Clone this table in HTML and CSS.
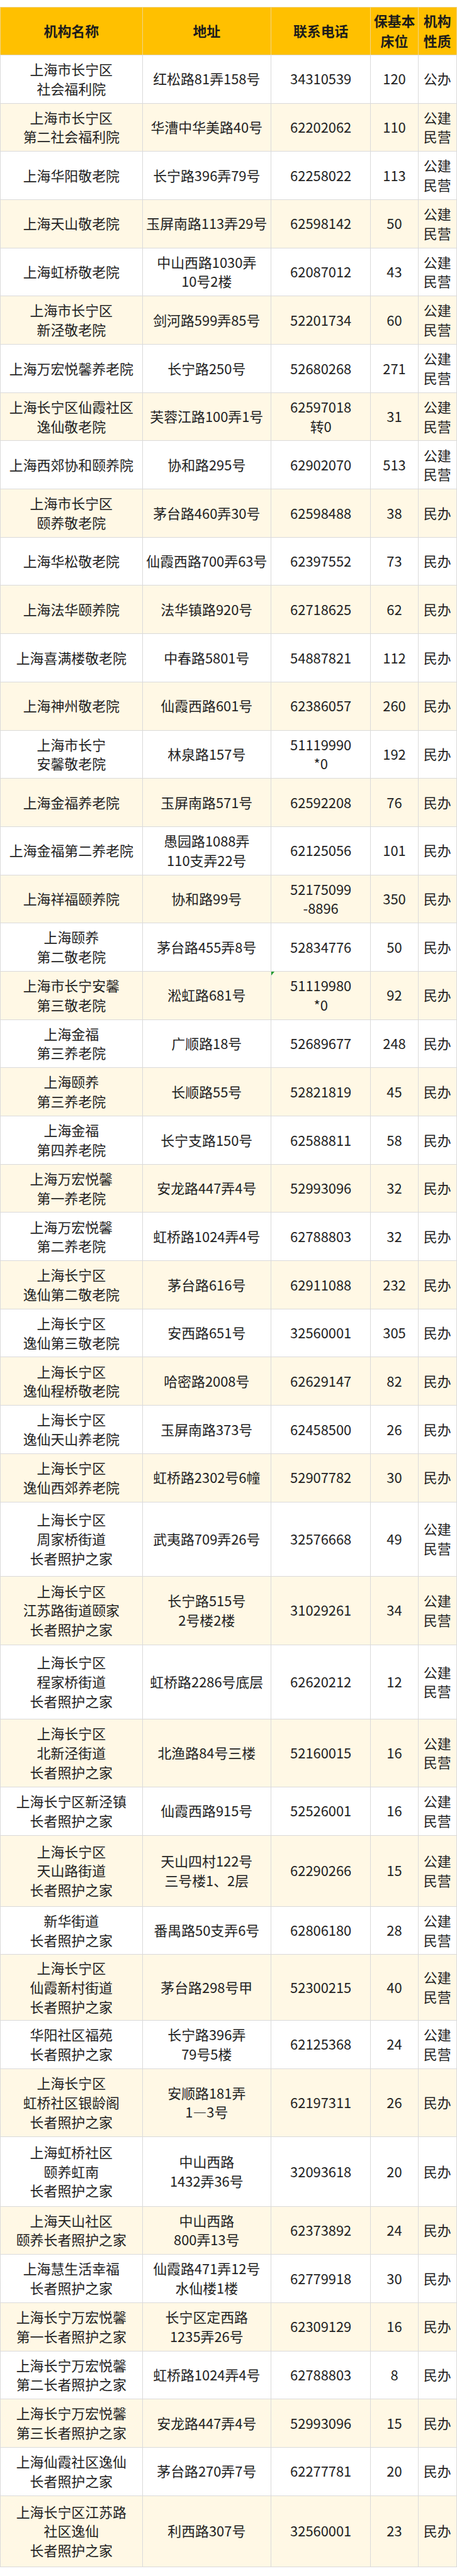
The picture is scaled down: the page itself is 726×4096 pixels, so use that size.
FILE: index.html
```html
<!DOCTYPE html>
<html lang="zh-CN">
<head>
<meta charset="utf-8">
<title>长宁区养老机构</title>
<link rel="stylesheet" href="styles.css">
</head>
<body>
<table class="list">
<colgroup>
<col class="c-name"><col class="c-addr"><col class="c-tel"><col class="c-bed"><col class="c-type">
</colgroup>
<thead>
<tr class="head"><th>机构名称</th><th>地址</th><th>联系电话</th><th>保基本床位</th><th>机构性质</th></tr>
</thead>
<tbody>
<tr><td>上海市长宁区<br>社会福利院</td><td>红松路81弄158号</td><td>34310539</td><td>120</td><td>公办</td></tr>
<tr><td>上海市长宁区<br>第二社会福利院</td><td>华漕中华美路40号</td><td>62202062</td><td>110</td><td>公建民营</td></tr>
<tr><td>上海华阳敬老院</td><td>长宁路396弄79号</td><td>62258022</td><td>113</td><td>公建民营</td></tr>
<tr><td>上海天山敬老院</td><td>玉屏南路113弄29号</td><td>62598142</td><td>50</td><td>公建民营</td></tr>
<tr><td>上海虹桥敬老院</td><td>中山西路1030弄<br>10号2楼</td><td>62087012</td><td>43</td><td>公建民营</td></tr>
<tr><td>上海市长宁区<br>新泾敬老院</td><td>剑河路599弄85号</td><td>52201734</td><td>60</td><td>公建民营</td></tr>
<tr><td>上海万宏悦馨养老院</td><td>长宁路250号</td><td>52680268</td><td>271</td><td>公建民营</td></tr>
<tr><td>上海长宁区仙霞社区<br>逸仙敬老院</td><td>芙蓉江路100弄1号</td><td>62597018<br>转0</td><td>31</td><td>公建民营</td></tr>
<tr><td>上海西郊协和颐养院</td><td>协和路295号</td><td>62902070</td><td>513</td><td>公建民营</td></tr>
<tr><td>上海市长宁区<br>颐养敬老院</td><td>茅台路460弄30号</td><td>62598488</td><td>38</td><td>民办</td></tr>
<tr><td>上海华松敬老院</td><td>仙霞西路700弄63号</td><td>62397552</td><td>73</td><td>民办</td></tr>
<tr><td>上海法华颐养院</td><td>法华镇路920号</td><td>62718625</td><td>62</td><td>民办</td></tr>
<tr><td>上海喜满楼敬老院</td><td>中春路5801号</td><td>54887821</td><td>112</td><td>民办</td></tr>
<tr><td>上海神州敬老院</td><td>仙霞西路601号</td><td>62386057</td><td>260</td><td>民办</td></tr>
<tr><td>上海市长宁<br>安馨敬老院</td><td>林泉路157号</td><td>51119990<br>*0</td><td>192</td><td>民办</td></tr>
<tr><td>上海金福养老院</td><td>玉屏南路571号</td><td>62592208</td><td>76</td><td>民办</td></tr>
<tr><td>上海金福第二养老院</td><td>愚园路1088弄<br>110支弄22号</td><td>62125056</td><td>101</td><td>民办</td></tr>
<tr><td>上海祥福颐养院</td><td>协和路99号</td><td>52175099<br>-8896</td><td>350</td><td>民办</td></tr>
<tr><td>上海颐养<br>第二敬老院</td><td>茅台路455弄8号</td><td>52834776</td><td>50</td><td>民办</td></tr>
<tr><td>上海市长宁安馨<br>第三敬老院</td><td>淞虹路681号</td><td class="note">51119980<br>*0</td><td>92</td><td>民办</td></tr>
<tr><td>上海金福<br>第三养老院</td><td>广顺路18号</td><td>52689677</td><td>248</td><td>民办</td></tr>
<tr><td>上海颐养<br>第三养老院</td><td>长顺路55号</td><td>52821819</td><td>45</td><td>民办</td></tr>
<tr><td>上海金福<br>第四养老院</td><td>长宁支路150号</td><td>62588811</td><td>58</td><td>民办</td></tr>
<tr><td>上海万宏悦馨<br>第一养老院</td><td>安龙路447弄4号</td><td>52993096</td><td>32</td><td>民办</td></tr>
<tr><td>上海万宏悦馨<br>第二养老院</td><td>虹桥路1024弄4号</td><td>62788803</td><td>32</td><td>民办</td></tr>
<tr><td>上海长宁区<br>逸仙第二敬老院</td><td>茅台路616号</td><td>62911088</td><td>232</td><td>民办</td></tr>
<tr><td>上海长宁区<br>逸仙第三敬老院</td><td>安西路651号</td><td>32560001</td><td>305</td><td>民办</td></tr>
<tr><td>上海长宁区<br>逸仙程桥敬老院</td><td>哈密路2008号</td><td>62629147</td><td>82</td><td>民办</td></tr>
<tr><td>上海长宁区<br>逸仙天山养老院</td><td>玉屏南路373号</td><td>62458500</td><td>26</td><td>民办</td></tr>
<tr><td>上海长宁区<br>逸仙西郊养老院</td><td>虹桥路2302号6幢</td><td>52907782</td><td>30</td><td>民办</td></tr>
<tr class="t162"><td>上海长宁区<br>周家桥街道<br>长者照护之家</td><td>武夷路709弄26号</td><td>32576668</td><td>49</td><td>公建民营</td></tr>
<tr class="t149"><td>上海长宁区<br>江苏路街道颐家<br>长者照护之家</td><td>长宁路515号<br>2号楼2楼</td><td>31029261</td><td>34</td><td>公建民营</td></tr>
<tr class="t162"><td>上海长宁区<br>程家桥街道<br>长者照护之家</td><td>虹桥路2286号底层</td><td>62620212</td><td>12</td><td>公建民营</td></tr>
<tr class="t148"><td>上海长宁区<br>北新泾街道<br>长者照护之家</td><td>北渔路84号三楼</td><td>52160015</td><td>16</td><td>公建民营</td></tr>
<tr><td>上海长宁区新泾镇<br>长者照护之家</td><td>仙霞西路915号</td><td>52526001</td><td>16</td><td>公建民营</td></tr>
<tr class="t155"><td>上海长宁区<br>天山路街道<br>长者照护之家</td><td>天山四村122号<br>三号楼1、2层</td><td>62290266</td><td>15</td><td>公建民营</td></tr>
<tr><td>新华街道<br>长者照护之家</td><td>番禺路50支弄6号</td><td>62806180</td><td>28</td><td>公建民营</td></tr>
<tr class="t143"><td>上海长宁区<br>仙霞新村街道<br>长者照护之家</td><td>茅台路298号甲</td><td>52300215</td><td>40</td><td>公建民营</td></tr>
<tr><td>华阳社区福苑<br>长者照护之家</td><td>长宁路396弄<br>79号5楼</td><td>62125368</td><td>24</td><td>公建民营</td></tr>
<tr class="t149"><td>上海长宁区<br>虹桥社区银龄阁<br>长者照护之家</td><td>安顺路181弄<br>1—3号</td><td>62197311</td><td>26</td><td>民办</td></tr>
<tr class="t151"><td>上海虹桥社区<br>颐养虹南<br>长者照护之家</td><td>中山西路<br>1432弄36号</td><td>32093618</td><td>20</td><td>民办</td></tr>
<tr><td>上海天山社区<br>颐养长者照护之家</td><td>中山西路<br>800弄13号</td><td>62373892</td><td>24</td><td>民办</td></tr>
<tr><td>上海慧生活幸福<br>长者照护之家</td><td>仙霞路471弄12号<br>水仙楼1楼</td><td>62779918</td><td>30</td><td>民办</td></tr>
<tr><td>上海长宁万宏悦馨<br>第一长者照护之家</td><td>长宁区定西路<br>1235弄26号</td><td>62309129</td><td>16</td><td>民办</td></tr>
<tr><td>上海长宁万宏悦馨<br>第二长者照护之家</td><td>虹桥路1024弄4号</td><td>62788803</td><td>8</td><td>民办</td></tr>
<tr><td>上海长宁万宏悦馨<br>第三长者照护之家</td><td>安龙路447弄4号</td><td>52993096</td><td>15</td><td>民办</td></tr>
<tr><td>上海仙霞社区逸仙<br>长者照护之家</td><td>茅台路270弄7号</td><td>62277781</td><td>20</td><td>民办</td></tr>
<tr class="t155"><td>上海长宁区江苏路<br>社区逸仙<br>长者照护之家</td><td>利西路307号</td><td>32560001</td><td>23</td><td>民办</td></tr>
</tbody>
</table>
</body>
</html>
```

FILE: styles.css
```css
html, body {
  margin: 0;
  padding: 0;
  background: #ffffff;
}

body {
  font-family: "Noto Sans CJK SC", "Noto Sans", sans-serif;
  color: #222222;
}

.list {
  margin-top: 11px;
  width: 725px;
  border-collapse: collapse;
  table-layout: fixed;
  font-size: 21.9px;
}

.c-name { width: 225.6px; }
.c-addr { width: 204.4px; }
.c-tel  { width: 158.4px; }
.c-bed  { width: 75.2px; }
.c-type { width: 61.3px; }

.list th,
.list td {
  border: 1px solid #dadada;
  padding: 0 3px;
  text-align: center;
  vertical-align: middle;
  word-break: break-all;
}

.list th {
  background: #ffc000;
  font-weight: bold;
  line-height: 32.9px;
  color: #1c1c1c;
  border-color: #efd58a;
  border-bottom-color: #dadada;
}

.head {
  height: 75.9px;
}

.list td {
  line-height: 30.7px;
  color: #222222;
}

.list tbody tr {
  height: 76.7px;
  background: #ffffff;
}

.list tbody tr:nth-child(even) {
  background: #fff8e5;
}

.list tbody tr.t162 { height: 118.3px; }
.list tbody tr.t155 { height: 113.2px; }
.list tbody tr.t151 { height: 110.2px; }
.list tbody tr.t149 { height: 108.8px; }
.list tbody tr.t148 { height: 108px; }
.list tbody tr.t143 { height: 104.4px; }

.note {
  position: relative;
}

.note::before {
  content: "";
  position: absolute;
  top: 0;
  left: 0;
  border-top: 6px solid #1e9b2e;
  border-right: 5px solid transparent;
}
```
